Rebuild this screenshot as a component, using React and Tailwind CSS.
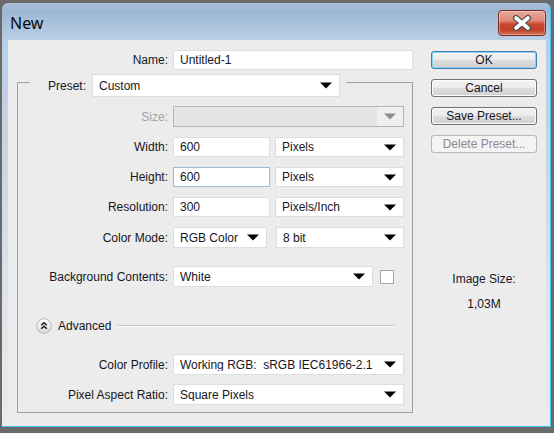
import React from "react";

const Arrow = ({ gray }) => (
  <svg width="12" height="7" viewBox="0 0 12 7" className="shrink-0">
    <path d="M0 0.5H12L6 6.5Z" fill={gray ? "#8e8e8e" : "#000"} />
  </svg>
);

function Select({ className = "", children }) {
  return (
    <div className={"flex items-center bg-white border border-[#dddddd] pl-[6px] pr-[7px] " + className}>
      <span className="flex-1 whitespace-pre overflow-hidden">{children}</span>
      <Arrow />
    </div>
  );
}

function Input({ className = "", children }) {
  return (
    <div className={"flex items-center bg-white border pl-[6px] " + className}>
      {children}
    </div>
  );
}

function Label({ children, gray }) {
  return (
    <div className={"w-[150px] shrink-0 text-right " + (gray ? "text-[#a3a3a3]" : "")}>{children}</div>
  );
}

function Button({ children, variant }) {
  if (variant === "disabled") {
    return (
      <div className="h-[18px] flex items-center justify-center rounded-[3px] border border-[#b5b8ba] bg-[#f4f4f4] text-[#8a8a8a]">
        {children}
      </div>
    );
  }
  return (
    <div
      className={
        "h-[18px] flex items-center justify-center rounded-[3px] border bg-[linear-gradient(to_bottom,#f3f3f3_0%,#ebebeb_50%,#dedede_51%,#d0d0d0_100%)] " +
        (variant === "default"
          ? "border-[#3c7fb1] shadow-[inset_0_0_0_1px_#8fd0f4]"
          : "border-[#707070] shadow-[inset_0_0_0_1px_#fbfbfb]")
      }
    >
      {children}
    </div>
  );
}

function CloseButton() {
  return (
    <div className="mt-[7px] w-[48px] h-[26px] rounded-[4px] border border-[#7a261b] bg-[linear-gradient(to_bottom,#e9a99c_0%,#df8a78_40%,#c8452d_55%,#c0432b_80%,#d3725c_100%)] shadow-[inset_0_0_0_1px_rgba(255,255,255,0.35)] flex items-center justify-center">
      <svg width="22" height="16" viewBox="0 0 22 16">
        <path d="M5 3L17 13M17 3L5 13" stroke="#4a4a4a" strokeWidth="6" strokeLinecap="round" />
        <path d="M5 3L17 13M17 3L5 13" stroke="#ffffff" strokeWidth="3.6" strokeLinecap="round" />
      </svg>
    </div>
  );
}

function AdvancedIcon() {
  return (
    <svg width="16" height="16" viewBox="0 0 16 16" className="shrink-0">
      <defs>
        <linearGradient id="advg" x1="0" y1="0" x2="0" y2="1">
          <stop offset="0" stopColor="#ffffff" />
          <stop offset="1" stopColor="#d9d9d9" />
        </linearGradient>
      </defs>
      <circle cx="8" cy="8" r="7.3" fill="url(#advg)" stroke="#b4b4b4" />
      <path d="M5.2 7.3L8 4.7L10.8 7.3M5.2 10.8L8 8.2L10.8 10.8" stroke="#1c1c1c" strokeWidth="1.5" fill="none" />
    </svg>
  );
}

export default function App() {
  return (
    <div className="w-[554px] h-[433px] bg-[#6a6a6a] pt-[3px] pl-[2px] pr-[3px] pb-[6px] font-['Liberation_Sans',Arial,sans-serif] text-[12px] text-[#16161e] leading-none">
      <div className="h-full rounded-t-[6px] border-r border-b border-[#3ec3ee] bg-[linear-gradient(to_bottom,#aac1da_0px,#9db7d3_8px,#b9cfe7_37px,#c4d3e2_120px,#dfe5eb_300px,#e9ebed_100%)] flex flex-col">
        <div className="h-[37px] shrink-0 flex items-start justify-between pl-[8px] pr-[4px]">
          <span className="mt-[12px] text-[16px] leading-none font-['Noto_Sans',sans-serif] text-[#0a0a0a]">New</span>
          <CloseButton />
        </div>
        <div className="flex-1 ml-[6px] mr-[4px] mb-[1px] bg-[#ececec] flex">
          {/* Left column */}
          <div className="w-[405px] pl-[9px] pt-[10px] flex flex-col">
            <div className="h-[20px] flex items-center gap-[5px]">
              <div className="w-[151px] shrink-0 text-right">Name:</div>
              <Input className="w-[241px] h-[20px] border-[#dedede]">Untitled-1</Input>
            </div>

            {/* Group box */}
            <div className="mt-[4px] w-[396px] flex flex-col">
              <div className="h-[23px] flex">
                <div className="w-[13px] mt-[8px] border-t border-l border-[#a0a0a0]" />
                <div className="ml-[18px] self-center">Preset:</div>
                <Select className="ml-[6px] w-[248px] h-[23px]">Custom</Select>
                <div className="ml-[6px] flex-1 mt-[8px] border-t border-r border-[#a0a0a0]" />
              </div>
              <div className="border-l border-r border-b border-[#a0a0a0] flex flex-col pb-[7px]">
                <div className="mt-[9px] h-[21px] flex items-center gap-[5px]">
                  <Label gray>Size:</Label>
                  <div className="w-[231px] h-[21px] flex border border-[#b4b4b4] bg-[#e5e5e5]">
                    <div className="flex-1" />
                    <div className="w-[26px] bg-[#efefef] flex items-center justify-center">
                      <Arrow gray />
                    </div>
                  </div>
                </div>
                <div className="mt-[10px] h-[20px] flex items-center gap-[5px]">
                  <Label>Width:</Label>
                  <Input className="w-[97px] h-[20px] border-[#dedede]">600</Input>
                  <Select className="w-[129px] h-[20px]">Pixels</Select>
                </div>
                <div className="mt-[10px] h-[20px] flex items-center gap-[5px]">
                  <Label>Height:</Label>
                  <Input className="w-[97px] h-[20px] border-[#9cb9d6]">600</Input>
                  <Select className="w-[129px] h-[20px]">Pixels</Select>
                </div>
                <div className="mt-[10px] h-[20px] flex items-center gap-[5px]">
                  <Label>Resolution:</Label>
                  <Input className="w-[97px] h-[20px] border-[#dedede]">300</Input>
                  <Select className="w-[129px] h-[20px]">Pixels/Inch</Select>
                </div>
                <div className="mt-[10px] h-[21px] flex items-center">
                  <Label>Color Mode:</Label>
                  <Select className="ml-[5px] w-[94px] h-[21px]">RGB Color</Select>
                  <Select className="ml-[9px] w-[128px] h-[21px]">8 bit</Select>
                </div>
                <div className="mt-[18px] h-[21px] flex items-center">
                  <Label>Background Contents:</Label>
                  <Select className="ml-[5px] w-[200px] h-[21px]">White</Select>
                  <div className="ml-[7px] w-[14px] h-[14px] bg-white border border-[#a6a6a6]" />
                </div>
                <div className="mt-[31px] h-[16px] flex items-center">
                  <div className="ml-[18px]">
                    <AdvancedIcon />
                  </div>
                  <span className="ml-[6px]">Advanced</span>
                  <div className="ml-[6px] mr-[17px] flex-1 border-t border-[#c2c2c2] border-b border-b-white" />
                </div>
                <div className="mt-[20px] h-[21px] flex items-center gap-[5px]">
                  <Label>Color Profile:</Label>
                  <Select className="w-[231px] h-[21px]">{"Working RGB:  sRGB IEC61966-2.1"}</Select>
                </div>
                <div className="mt-[9px] h-[21px] flex items-center gap-[5px]">
                  <Label>Pixel Aspect Ratio:</Label>
                  <Select className="w-[231px] h-[21px]">Square Pixels</Select>
                </div>
              </div>
            </div>
          </div>

          {/* Right column */}
          <div className="ml-[18px] w-[106px] pt-[11px] flex flex-col">
            <div className="flex flex-col gap-[10px]">
              <Button variant="default">OK</Button>
              <Button>Cancel</Button>
              <Button>Save Preset...</Button>
              <Button variant="disabled">Delete Preset...</Button>
            </div>
            <div className="mt-[119px] text-center leading-[14px]">Image Size:</div>
            <div className="mt-[11px] text-center leading-[14px]">1,03M</div>
          </div>
        </div>
      </div>
    </div>
  );
}
